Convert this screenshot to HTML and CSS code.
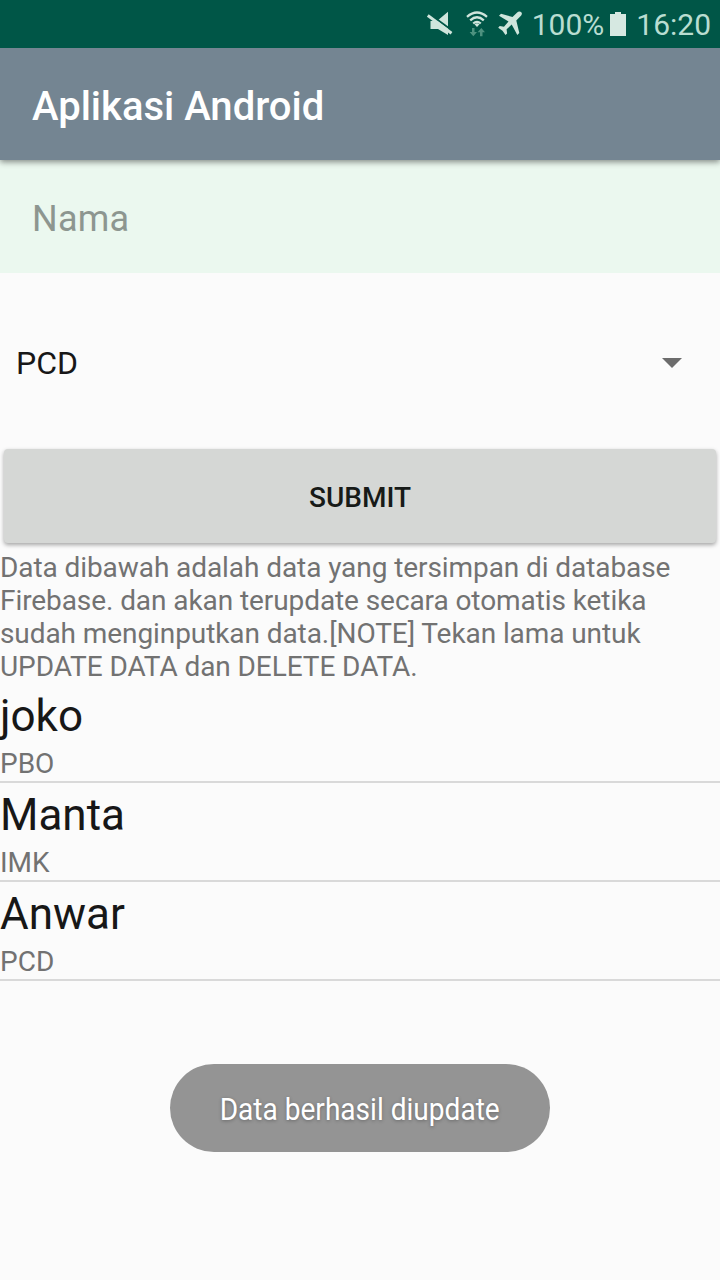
FILE: index.html
```html
<!DOCTYPE html>
<html lang="id">
<head>
<meta charset="utf-8">
<title>Aplikasi Android</title>
<link rel="stylesheet" href="styles.css">
</head>
<body>
<div class="screen">
  <div class="status-bar">
    <svg class="icon-mute" width="26" height="26" viewBox="0 0 26 26">
      <path d="M3.500 10H10l11-9.300V24L11 18H3.500z" fill="#cfe5dc"/>
      <path d="M4 4L26 20.300" stroke="#005647" stroke-width="2"/>
      <path d="M.8 4.500L24.500 22.300" stroke="#cfe5dc" stroke-width="3"/>
    </svg>
    <svg class="icon-wifi" width="22" height="26" viewBox="0 0 22 26">
      <g fill="none" stroke="#cfe5dc" stroke-width="2.300">
        <path d="M1 5.800Q11-2.800 21 5.800"/>
        <path d="M4.200 9.300Q11 3.300 17.800 9.300"/>
        <path d="M7.200 12.500Q11 9.200 14.800 12.500"/>
      </g>
      <path d="M8.500 13.200Q11 11.500 13.500 13.200L11 16z" fill="#cfe5dc"/>
      <path d="M6 17h2.500v4H11l-3.700 4.300L3.600 21H6zM14 25.200h2.500v-4H19L15.300 17l-3.700 4.200H14z" fill="#4d917f"/>
    </svg>
    <svg class="icon-plane" width="26" height="26" viewBox="0 0 26 26">
      <path d="M24.300 1.200c-1.300-1.200-3.200-.6-4.400.5L15.500 6 4 2.800 2 4.800l9.500 5.700-4.500 5.200-4.300-.6-1.500 1.600 4.300 3 3 4.400 1.600-1.600-.5-4.300 5.100-4.600L20.300 24l2-2-3-12.600 4.400-4.300c1.100-1.100 1.700-2.800.6-3.900z" fill="#cfe5dc"/>
    </svg>
    <span class="battery-text">100%</span>
    <svg class="icon-battery" width="16" height="24" viewBox="0 0 16 24">
      <path d="M5 0h6v2h5v22H0V2h5z" fill="#d6e8e1"/>
    </svg>
    <span class="clock">16:20</span>
  </div>
  <header class="app-bar"><h1 class="title">Aplikasi Android</h1></header>
  <div class="name-field">Nama</div>
  <div class="spinner">
    <span>PCD</span>
    <svg class="caret" width="20" height="10" viewBox="0 0 20 10"><path d="M0 0h20L10 10z" fill="#6c6c6c"/></svg>
  </div>
  <button class="submit">SUBMIT</button>
  <p class="note">Data dibawah adalah data yang tersimpan di database<br>Firebase. dan akan terupdate secara otomatis ketika<br>sudah menginputkan data.[NOTE] Tekan lama untuk<br>UPDATE DATA dan DELETE DATA.</p>
  <ul class="list">
    <li class="row"><span class="name">joko</span><span class="course">PBO</span></li>
    <li class="row"><span class="name">Manta</span><span class="course">IMK</span></li>
    <li class="row"><span class="name">Anwar</span><span class="course">PCD</span></li>
  </ul>
  <div class="toast"><span class="toast-text">Data berhasil diupdate</span></div>
</div>
</body>
</html>
```
FILE: styles.css
```css
* { box-sizing: border-box; }
body { margin: 0; background: #fbfbfb; }
.screen {
  position: relative;
  width: 720px;
  height: 1280px;
  overflow: hidden;
  display: flex;
  flex-direction: column;
  font-family: Roboto, sans-serif;
  color: #171717;
}
.status-bar {
  flex: none;
  height: 48px;
  display: flex;
  align-items: center;
  justify-content: flex-end;
  padding-right: 9px;
  background: #005647;
  color: #b9ddd1;
  font-size: 30px;
  line-height: 48px;
  white-space: nowrap;
  z-index: 2;
}
.icon-mute { margin-right: 13px; }
.icon-wifi { margin-right: 9px; }
.icon-plane { margin-right: 9px; }
.battery-text { margin-right: 6px; padding-top: 1px; }
.icon-battery { margin-right: 10px; }
.clock { padding-top: 1px; }
.app-bar {
  flex: none;
  height: 112px;
  display: flex;
  align-items: center;
  padding: 4px 32px 0;
  background: #748592;
  box-shadow: 0 2px 6px rgba(0, 0, 0, .45);
  z-index: 1;
}
.title { margin: 0; font-size: 40px; font-weight: 500; line-height: 47px; color: #fff; }
.name-field {
  flex: none;
  height: 113px;
  padding: 5px 32px 0;
  display: flex;
  align-items: center;
  background: #ebf8ef;
  color: #8d9690;
  font-size: 36px;
  letter-spacing: .2px;
}
.spinner {
  flex: none;
  height: 176px;
  padding: 4px 38px 0 16px;
  display: flex;
  align-items: center;
  justify-content: space-between;
  font-size: 32px;
}
.submit {
  flex: none;
  height: 94px;
  margin: 0 4px;
  padding: 2px 0 0;
  border: 0;
  border-radius: 4px;
  background: #d5d7d5;
  box-shadow: 0 2px 4px rgba(0, 0, 0, .35);
  color: #171a18;
  font: 500 28px Roboto, sans-serif;
}
.note {
  margin: 8px 0 0;
  font-size: 28px;
  line-height: 33px;
  letter-spacing: -.08px;
  color: #727272;
  white-space: nowrap;
}
.list { margin: 1px 0 0; padding: 0; list-style: none; }
.row {
  height: 99px;
  padding-top: 6px;
  display: flex;
  flex-direction: column;
  border-bottom: 2px solid #d9d9d9;
}
.name { font-size: 44px; line-height: 52px; }
.course { font-size: 28px; line-height: 33px; color: #727272; margin-top: 5px; }
.toast {
  position: absolute;
  left: 170px;
  top: 1064px;
  width: 380px;
  height: 88px;
  border-radius: 44px;
  display: flex;
  align-items: center;
  justify-content: center;
  background: #949494;
  color: #fff;
}
.toast-text {
  font-size: 32px;
  white-space: nowrap;
  padding-top: 2px;
  transform: scaleX(.877);
  text-shadow: 0 1px 4px rgba(0, 0, 0, .3);
}
```
